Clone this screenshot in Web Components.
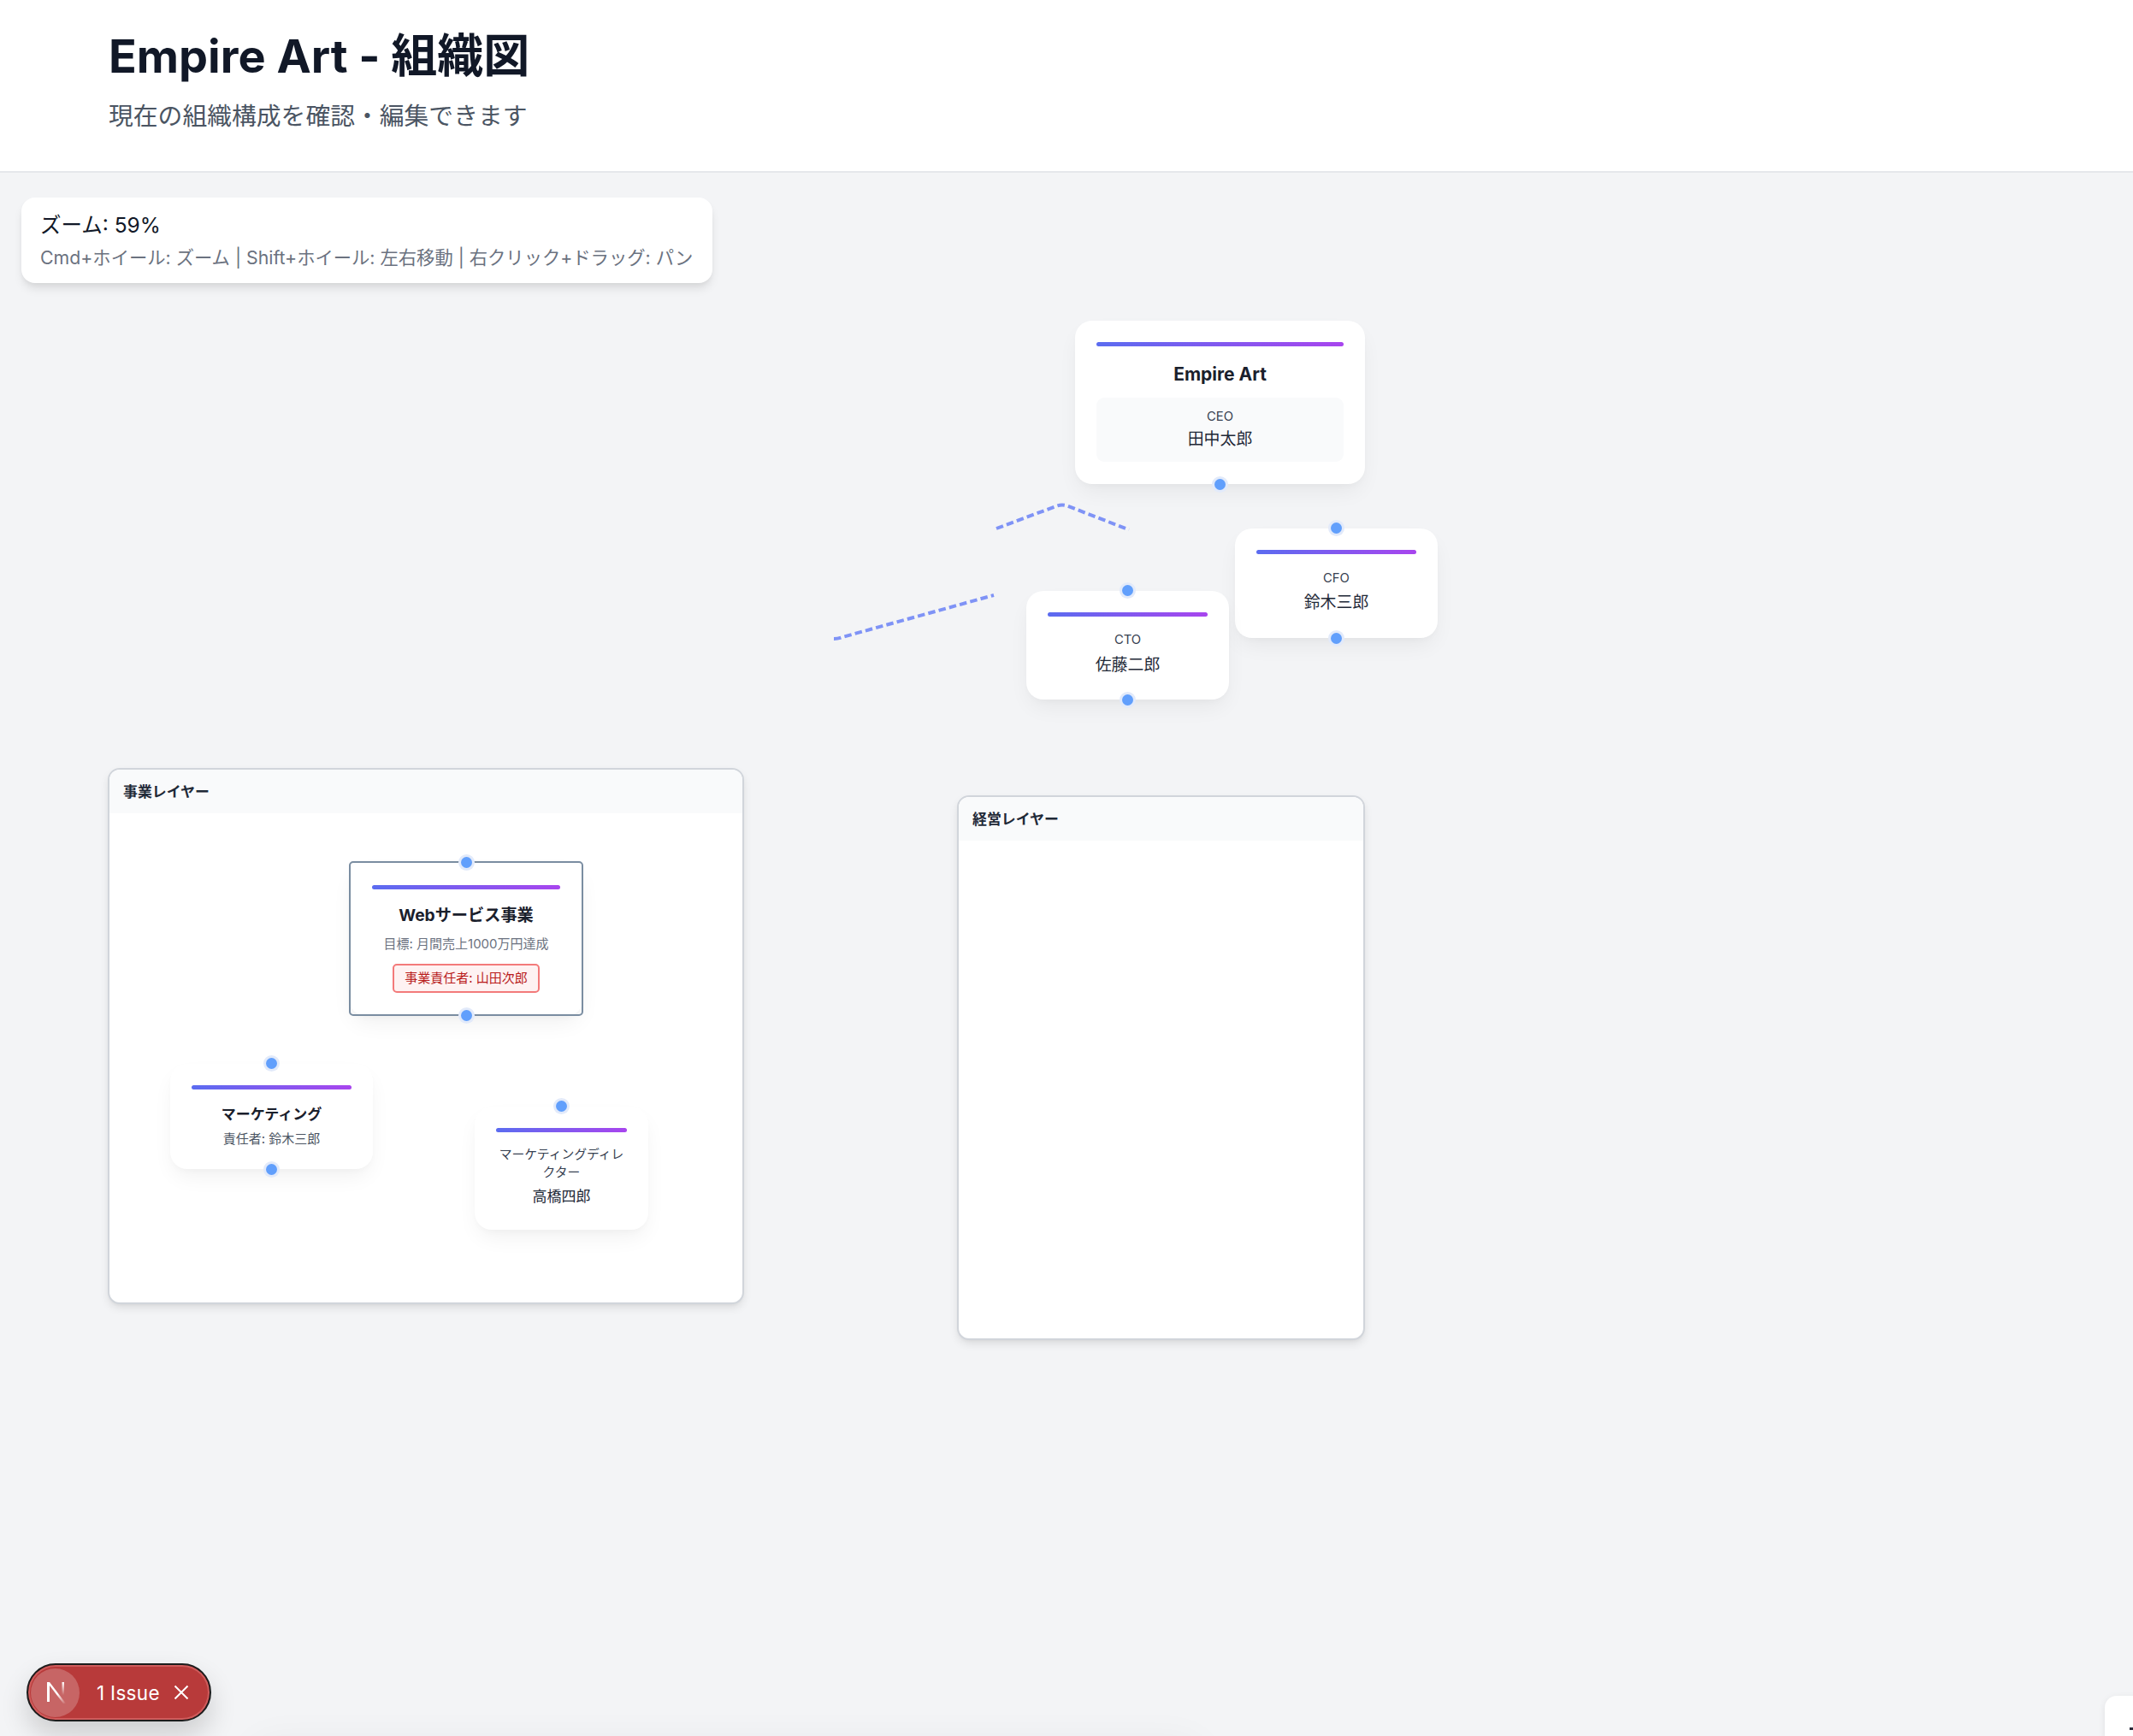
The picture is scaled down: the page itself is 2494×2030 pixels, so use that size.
<!DOCTYPE html>
<html lang="ja">
<head>
<meta charset="utf-8">
<title>Empire Art - 組織図</title>
<style>
    html, body { margin: 0; height: 100%; }
    body {
        width: 2494px;
        height: 2030px;
        overflow: hidden;
        display: flex;
        flex-direction: column;
        background: #f3f4f6;
        font-family: Inter, "Noto Sans CJK JP", sans-serif;
        color: #111827;
    }
</style>
</head>
<body>

<app-header>
    <span slot="title">Empire Art - 組織図</span>
    <span slot="sub">現在の組織構成を確認・編集できます</span>
</app-header>

<org-canvas>
    <zoom-panel zoom="59"></zoom-panel>

    <svg slot="edges" width="2494" height="1829" viewBox="0 201 2494 1829" fill="none">
        <path d="M1165 617 L1236 590.5 Q1242 588.5 1248 590.5 L1320 618.5" stroke="#7f93f6" stroke-width="4" stroke-dasharray="8.5 4.2"/>
        <path d="M975 746 Q980 746 985 744 L1162 695" stroke="#7f93f6" stroke-width="4" stroke-dasharray="8.5 4.2"/>
    </svg>

    <org-node handles="bottom" style="--x:1257px;--y:173px;--w:339px;--h:191px">
        <node-line kind="title" style="margin-top:19px">Empire Art</node-line>
        <node-staff style="margin-top:13px">
            <node-line kind="role">CEO</node-line>
            <node-line kind="name" style="margin-top:3px">田中太郎</node-line>
        </node-staff>
    </org-node>

    <org-node handles="top bottom" style="--x:1444px;--y:416px;--w:237px;--h:128px">
        <node-line kind="role" style="margin-top:18px">CFO</node-line>
        <node-line kind="name" style="margin-top:5px">鈴木三郎</node-line>
    </org-node>

    <org-node handles="top bottom" style="--x:1200px;--y:489px;--w:237px;--h:127px">
        <node-line kind="role" style="margin-top:17px">CTO</node-line>
        <node-line kind="name" style="margin-top:6px">佐藤二郎</node-line>
    </org-node>

    <org-layer label="事業レイヤー" style="--x:126px;--y:696px;--w:744px;--h:627px">
        <org-node selected handles="top bottom" style="--x:280px;--y:107px;--w:274px;--h:181px;--bar-top:28px;--side:27px;--dot-top:-5px;--dot-bottom:-6px">
            <node-line kind="title" style="margin-top:16px;font-size:19.2px">Webサービス事業</node-line>
            <node-line kind="sub" style="margin-top:9px">目標: 月間売上1000万円達成</node-line>
            <node-badge style="margin-top:13px">事業責任者: 山田次郎</node-badge>
        </org-node>

        <org-node handles="top bottom" style="--x:71px;--y:344px;--w:237px;--h:123px">
            <node-line kind="title" style="margin-top:15px;font-size:17px">マーケティング</node-line>
            <node-line kind="sub" style="margin-top:4px;color:#4b5563">責任者: 鈴木三郎</node-line>
        </org-node>

        <org-node handles="top" style="--x:427px;--y:394px;--w:203px;--h:144px">
            <node-line kind="role" style="margin-top:16px">マーケティングディレクター</node-line>
            <node-line kind="name" style="margin-top:4px;font-size:17px">高橋四郎</node-line>
        </org-node>
    </org-layer>

    <org-layer label="経営レイヤー" style="--x:1119px;--y:728px;--w:477px;--h:637px"></org-layer>

    <offscreen-sheet></offscreen-sheet>
    <issue-pill count="1 Issue"></issue-pill>
    <corner-tab></corner-tab>
</org-canvas>

<script>
// page header
class AppHeader extends HTMLElement {
    constructor () {
        super();
        this.attachShadow({ mode: 'open' });
        this.shadowRoot.innerHTML = `
            <style>
                :host {
                    display: block;
                    flex: none;
                    box-sizing: border-box;
                    height: 202px;
                    padding: 31px 127px 0;
                    background: white;
                    border-bottom: 2px solid #e5e7eb;
                }
                h1 {
                    margin: 0;
                    font-size: 54px;
                    line-height: 70px;
                    font-weight: 700;
                    color: #111827;
                }
                p {
                    margin: 15px 0 0;
                    font-size: 28.8px;
                    line-height: 40px;
                    color: #4b5563;
                }
            </style>
            <h1><slot name="title"></slot></h1>
            <p><slot name="sub"></slot></p>
        `;
    }
}

// free canvas, nodes and layers are placed on it by their --x/--y
class OrgCanvas extends HTMLElement {
    constructor () {
        super();
        this.attachShadow({ mode: 'open' });
        this.shadowRoot.innerHTML = `
            <style>
                :host {
                    display: block;
                    position: relative;
                    flex: 1;
                    background: #f3f4f6;
                    overflow: hidden;
                }
                .edges { position: absolute; left: 0; top: 0; }
            </style>
            <div class="edges"><slot name="edges"></slot></div>
            <slot></slot>
        `;
    }
}

class ZoomPanel extends HTMLElement {
    constructor () {
        super();
        this.attachShadow({ mode: 'open' });
        this.shadowRoot.innerHTML = `
            <style>
                :host {
                    position: absolute;
                    left: 25px;
                    top: 29px;
                    width: 808px;
                    height: 100px;
                    box-sizing: border-box;
                    padding: 14px 22px;
                    background: white;
                    border-radius: 16px;
                    box-shadow: 0 8px 12px -2px rgba(0,0,0,.1), 0 3px 6px -2px rgba(0,0,0,.06);
                }
                .zoom { font-size: 24.5px; line-height: 36px; color: #111827; }
                .help { margin-top: 3px; font-size: 21.3px; line-height: 34px; color: #6b7280; white-space: nowrap; }
            </style>
            <div class="zoom">ズーム: ${this.getAttribute('zoom')}%</div>
            <div class="help">Cmd+ホイール: ズーム | Shift+ホイール: 左右移動 | 右クリック+ドラッグ: パン</div>
        `;
    }
}

class OrgLayer extends HTMLElement {
    constructor () {
        super();
        this.attachShadow({ mode: 'open' });
        this.shadowRoot.innerHTML = `
            <style>
                :host {
                    position: absolute;
                    left: var(--x);
                    top: var(--y);
                    width: var(--w);
                    height: var(--h);
                    box-sizing: border-box;
                    background: white;
                    border: 2px solid #d1d5db;
                    border-radius: 14px;
                    box-shadow: 0 5px 12px -2px rgba(0,0,0,.12), 0 2px 4px -2px rgba(0,0,0,.06);
                }
                header {
                    box-sizing: border-box;
                    height: 51px;
                    padding: 0 16px 2px;
                    display: flex;
                    align-items: center;
                    background: #f9fafb;
                    border-radius: 12px 12px 0 0;
                    font-size: 16.9px;
                    font-weight: 600;
                    color: #1f2937;
                }
            </style>
            <header>${this.getAttribute('label')}</header>
            <slot></slot>
        `;
    }
}

class OrgNode extends HTMLElement {
    constructor () {
        super();
        this.attachShadow({ mode: 'open' });
        const handles = (this.getAttribute('handles') || '').split(' ').filter(Boolean);
        this.shadowRoot.innerHTML = `
            <style>
                :host {
                    position: absolute;
                    left: var(--x);
                    top: var(--y);
                    width: var(--w);
                    height: var(--h);
                    box-sizing: border-box;
                    padding: var(--bar-top, 25px) var(--side, 25px) 0;
                    background: white;
                    border-radius: 20px;
                    text-align: center;
                    box-shadow: 0 12px 26px -4px rgba(0,0,0,.06), 0 4px 10px -3px rgba(0,0,0,.03);
                }
                :host([selected])::before {
                    content: "";
                    position: absolute;
                    inset: 0;
                    border: 2px solid #7a8da1;
                    border-radius: 5px;
                    pointer-events: none;
                }
                .bar {
                    height: 5px;
                    border-radius: 3px;
                    background: linear-gradient(90deg, #5b6cf0, #a845ee);
                }
            </style>
            <div class="bar"></div>
            <slot></slot>
            ${handles.map((h) => `<conn-dot side="${h}"></conn-dot>`).join('')}
        `;
    }
}

// connection handle on the top or bottom edge of a node
class ConnDot extends HTMLElement {
    constructor () {
        super();
        this.attachShadow({ mode: 'open' });
        this.shadowRoot.innerHTML = `
            <style>
                :host {
                    position: absolute;
                    left: 50%;
                    width: 13px;
                    height: 13px;
                    margin-left: -6.5px;
                    border-radius: 50%;
                    background: #619ffc;
                    box-shadow: 0 0 0 3px #e2eafa;
                }
                :host([side="top"]) { top: var(--dot-top, -7px); }
                :host([side="bottom"]) { bottom: var(--dot-bottom, -7px); }
            </style>
        `;
    }
}

class NodeLine extends HTMLElement {
    constructor () {
        super();
        this.attachShadow({ mode: 'open' });
        this.shadowRoot.innerHTML = `
            <style>
                :host { display: block; text-align: center; }
                :host([kind="title"]) { font-size: 21px; line-height: 28px; font-weight: 700; color: #1a202c; }
                :host([kind="role"]) { font-size: 14.8px; line-height: 21px; color: #374151; }
                :host([kind="name"]) { font-size: 18.9px; line-height: 26px; color: #1f2937; }
                :host([kind="sub"]) { font-size: 15px; line-height: 21px; color: #6b7280; }
            </style>
            <slot></slot>
        `;
    }
}

class NodeStaff extends HTMLElement {
    constructor () {
        super();
        this.attachShadow({ mode: 'open' });
        this.shadowRoot.innerHTML = `
            <style>
                :host {
                    display: block;
                    box-sizing: border-box;
                    height: 75px;
                    padding-top: 12px;
                    background: #f9fafb;
                    border-radius: 9px;
                }
            </style>
            <slot></slot>
        `;
    }
}

class NodeBadge extends HTMLElement {
    constructor () {
        super();
        this.attachShadow({ mode: 'open' });
        this.shadowRoot.innerHTML = `
            <style>
                :host {
                    display: table;
                    box-sizing: border-box;
                    margin-inline: auto;
                    height: 34px;
                    padding: 0 12px;
                    font-size: 15px;
                    line-height: 30px;
                    color: #b91c1c;
                    background: #fef2f2;
                    border: 2px solid #f37a7a;
                    border-radius: 5px;
                    white-space: nowrap;
                }
            </style>
            <slot></slot>
        `;
    }
}

// the dev overlay pill bottom left
class IssuePill extends HTMLElement {
    constructor () {
        super();
        this.attachShadow({ mode: 'open' });
        this.shadowRoot.innerHTML = `
            <style>
                :host {
                    position: absolute;
                    left: 31px;
                    top: 1743px;
                    width: 216px;
                    height: 68px;
                    box-sizing: border-box;
                    display: flex;
                    align-items: center;
                    padding-left: 3px;
                    background: #b83a3a;
                    border: 2px solid #1c1c1c;
                    border-radius: 34px;
                    box-shadow: inset 0 0 0 2px #cf5c5c, 0 16px 32px rgba(0,0,0,.16);
                    color: white;
                }
                .logo {
                    flex: none;
                    width: 57px;
                    height: 57px;
                    border-radius: 50%;
                    background: #c76565;
                    display: flex;
                    align-items: center;
                    justify-content: center;
                }
                .count {
                    margin-left: 20px;
                    font-size: 22.5px;
                    font-weight: 400;
                    letter-spacing: .3px;
                    white-space: nowrap;
                }
                .close { margin-left: 16px; flex: none; }
            </style>
            <div class="logo">
                <svg width="24" height="27" viewBox="0 0 24 27" fill="none">
                    <defs>
                        <linearGradient id="fade-a" x1="0" y1="0" x2="1" y2="1">
                            <stop offset=".55" stop-color="white"/>
                            <stop offset="1" stop-color="white" stop-opacity="0"/>
                        </linearGradient>
                        <linearGradient id="fade-b" x1="0" y1="0" x2="0" y2="1">
                            <stop offset="0" stop-color="white"/>
                            <stop offset=".8" stop-color="white" stop-opacity="0"/>
                        </linearGradient>
                    </defs>
                    <path d="M2 1 H5 V24 H2 Z" fill="white"/>
                    <path d="M2 1 H5 L24 26 H21 Z" fill="url(#fade-a)"/>
                    <path d="M19.5 1 H22 V20 H19.5 Z" fill="url(#fade-b)"/>
                </svg>
            </div>
            <span class="count">${this.getAttribute('count')}</span>
            <svg class="close" width="18" height="18" viewBox="0 0 18 18" fill="none" stroke="white" stroke-width="2">
                <path d="M1.5 1.5 L16.5 16.5 M16.5 1.5 L1.5 16.5"/>
            </svg>
        `;
    }
}

// something below the fold, only its shadow shows along the bottom edge
class OffscreenSheet extends HTMLElement {
    constructor () {
        super();
        this.attachShadow({ mode: 'open' });
        this.shadowRoot.innerHTML = `
            <style>
                :host {
                    position: absolute;
                    left: 300px;
                    top: 1838px;
                    width: 1100px;
                    height: 40px;
                    border-radius: 30px;
                    box-shadow: 0 0 40px 10px rgba(0,0,0,.035);
                }
            </style>
        `;
    }
}

// cut off panel in the bottom right corner of the window
class CornerTab extends HTMLElement {
    constructor () {
        super();
        this.attachShadow({ mode: 'open' });
        this.shadowRoot.innerHTML = `
            <style>
                :host {
                    position: absolute;
                    left: 2461px;
                    top: 1781px;
                    width: 60px;
                    height: 60px;
                    background: white;
                    border-radius: 14px;
                    box-shadow: 0 2px 8px rgba(0,0,0,.08);
                }
                i { position: absolute; left: 29px; top: 37px; width: 8px; height: 3px; background: #2b2b3a; }
            </style>
            <i></i>
        `;
    }
}

customElements.define('app-header', AppHeader);
customElements.define('org-canvas', OrgCanvas);
customElements.define('zoom-panel', ZoomPanel);
customElements.define('org-layer', OrgLayer);
customElements.define('conn-dot', ConnDot);
customElements.define('org-node', OrgNode);
customElements.define('node-line', NodeLine);
customElements.define('node-staff', NodeStaff);
customElements.define('node-badge', NodeBadge);
customElements.define('issue-pill', IssuePill);
customElements.define('offscreen-sheet', OffscreenSheet);
customElements.define('corner-tab', CornerTab);
</script>
</body>
</html>
